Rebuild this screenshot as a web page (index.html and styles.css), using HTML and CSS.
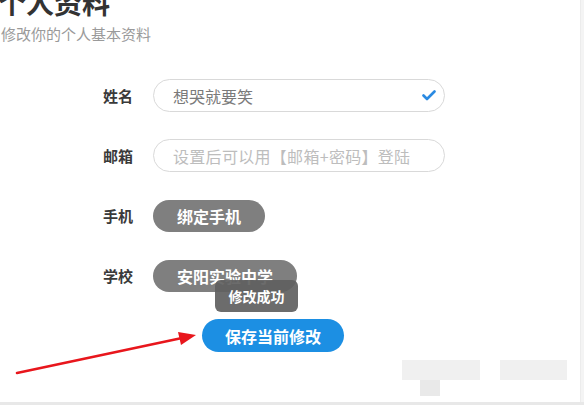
FILE: index.html
```html
<!DOCTYPE html>
<html lang="zh-CN">
<head>
<meta charset="utf-8">
<title>个人资料</title>
<link rel="stylesheet" href="styles.css">
</head>
<body>
<div class="page">
  <h1 class="title">个人资料</h1>
  <p class="subtitle">修改你的个人基本资料</p>
  <div class="form">
    <div class="label">姓名</div>
    <div class="field">
      <span class="value">想哭就要笑</span>
      <svg class="check" width="14" height="11" viewBox="0 0 14 11"><path d="M1.5 5.5 L5 9 L12.5 1.5" fill="none" stroke="#2a8ae2" stroke-width="2.6" stroke-linecap="round" stroke-linejoin="round"/></svg>
    </div>
    <div class="label">邮箱</div>
    <div class="field"><span class="placeholder">设置后可以用【邮箱+密码】登陆</span></div>
    <div class="label">手机</div>
    <div class="ctrl"><span class="btn-gray">绑定手机</span></div>
    <div class="label">学校</div>
    <div class="ctrl"><span class="btn-gray">安阳实验中学</span></div>
    <div class="label"></div>
    <div class="ctrl"><span class="btn-save">保存当前修改</span></div>
  </div>
  <div class="toast">修改成功</div>
  <svg class="arrow" width="584" height="405" viewBox="0 0 584 405">
    <line x1="17" y1="373" x2="182" y2="338" stroke="#e8161c" stroke-width="2.6" stroke-linecap="round"/>
    <polygon points="196,335 178,332 181,345" fill="#e8161c"/>
  </svg>
  <div class="wm wm1"></div>
  <div class="wm wm2"></div>
  <div class="wm wm3"></div>
  <div class="edge-right"></div>
  <div class="edge-bottom"></div>
</div>
</body>
</html>
```
FILE: styles.css
```css
* { box-sizing: border-box; }
html, body { margin: 0; padding: 0; background: #fff; }
body {
  font-family: "Noto Sans CJK SC", "Noto Sans", sans-serif;
  width: 584px;
  height: 405px;
  overflow: hidden;
}
.page {
  position: relative;
  width: 584px;
  height: 405px;
  overflow: hidden;
}
.title {
  margin: -13px 0 0 -2px;
  font-size: 28px;
  line-height: 30px;
  font-weight: bold;
  color: #333;
  letter-spacing: 0;
}
.subtitle {
  margin: 8px 0 0 1px;
  font-size: 15px;
  line-height: 18px;
  color: #9a9a9a;
}
.form {
  display: grid;
  grid-template-columns: 133px auto;
  column-gap: 20px;
  row-gap: 27px;
  margin-top: 36px;
  align-items: center;
}
.label {
  text-align: right;
  font-size: 15px;
  font-weight: bold;
  color: #3a3a3a;
  line-height: 33px;
}
.field {
  width: 292px;
  height: 33px;
  border: 1px solid #d9d9d9;
  border-radius: 17px;
  display: flex;
  align-items: center;
  padding: 0 8px 0 19px;
  justify-content: space-between;
}
.value { font-size: 16px; color: #7a7a7a; }
.placeholder { font-size: 16px; color: #bdbdbd; letter-spacing: 0.3px; }
.check { margin-right: 0; }
.ctrl { display: flex; height: 33px; align-items: center; }
.btn-gray {
  display: inline-flex;
  align-items: center;
  height: 32px;
  padding: 0 24px;
  border-radius: 16px;
  background: #7f7f7f;
  color: #fff;
  font-size: 16px;
  font-weight: bold;
}
.btn-save {
  display: inline-flex;
  align-items: center;
  height: 33px;
  margin-left: 49px;
  padding: 0 23px;
  border-radius: 17px;
  background: #1c8fe3;
  color: #fff;
  font-size: 16px;
  font-weight: bold;
}
.toast {
  position: absolute;
  left: 215px;
  top: 280px;
  width: 83px;
  height: 32px;
  border-radius: 6px;
  background: rgba(95, 95, 95, 0.92);
  color: #fff;
  font-size: 14px;
  font-weight: bold;
  display: flex;
  align-items: center;
  justify-content: center;
}
.arrow { position: absolute; left: 0; top: 0; pointer-events: none; }
.wm { position: absolute; }
.wm1 { left: 402px; top: 360px; width: 78px; height: 20px; background: #f0f0f0; }
.wm2 { left: 500px; top: 360px; width: 67px; height: 20px; background: #f0f0f0; }
.wm3 { left: 420px; top: 380px; width: 20px; height: 16px; background: #e9e9e9; }
.edge-right { position: absolute; right: 0; top: 0; width: 4px; height: 405px; background: #f4f4f4; border-left: 1px solid #ececec; }
.edge-bottom { position: absolute; left: 0; bottom: 0; width: 584px; height: 3px; background: #e8e8e8; }
```
